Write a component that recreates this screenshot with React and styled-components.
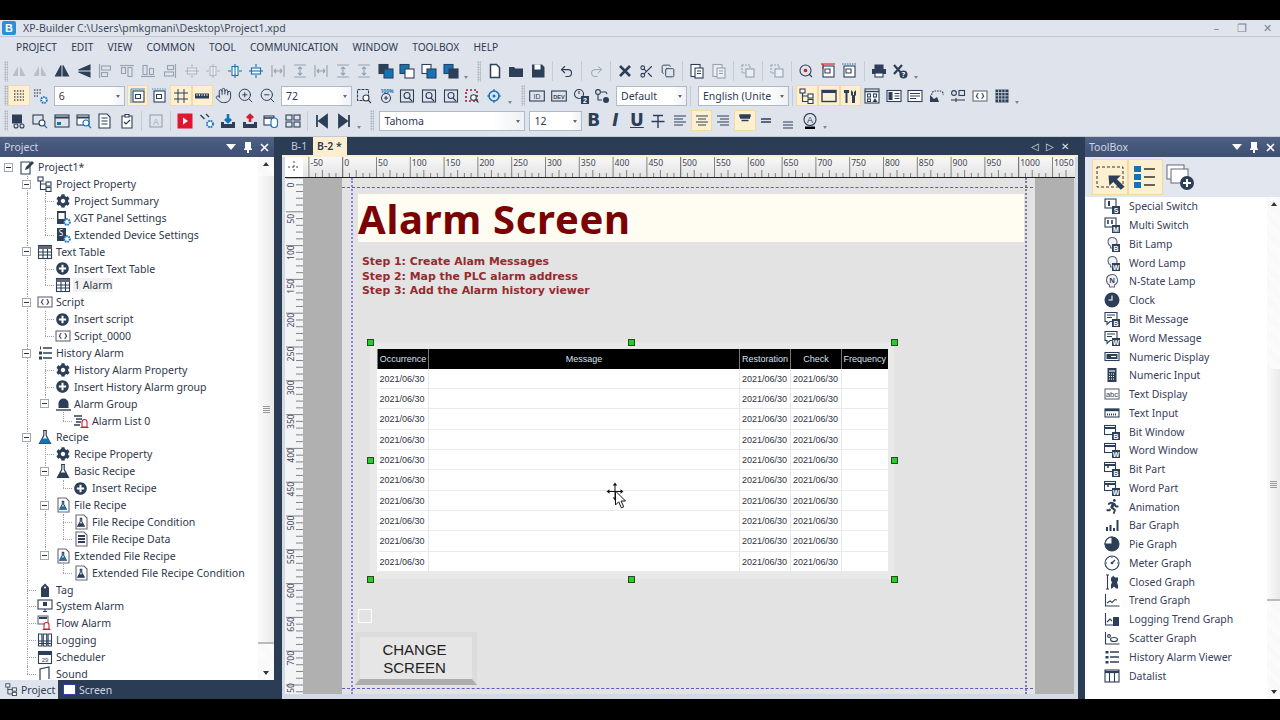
import React from 'react'
import styled, { createGlobalStyle } from 'styled-components'
import { Hand, ZoomIn, ZoomOut, Undo2, Redo2, Scissors, Copy } from 'lucide-react'
import { FaCog, FaPlusCircle, FaRunning } from 'react-icons/fa'

const NAVY = '#2d3f58'
const BLUE = '#1273b9'

const GlobalStyle = createGlobalStyle`
  html, body { margin: 0; width: 1280px; height: 720px; overflow: hidden; background: #000; }
  body { font-family: "Noto Sans", "Open Sans", sans-serif; }
  * { box-sizing: border-box; }
`

const Page = styled.div`
  width: 1280px;
  height: 720px;
  display: flex;
  flex-direction: column;
  background: #000;
`
const BlackBar = styled.div`
  height: ${p => p.$h}px;
  flex: none;
  background: #000;
`
const TitleBar = styled.div`
  height: 17px;
  flex: none;
  display: flex;
  align-items: center;
  background: #e0e5ed;
  border-bottom: 1px solid #c3c8d0;
  color: #3e4a5c;
  font-size: 10.5px;
`
const AppLogo = styled.span`
  width: 14px;
  height: 14px;
  margin: 0 7px 0 2px;
  background: #2d8fd8;
  color: #fff;
  font: bold 11px "Liberation Sans", sans-serif;
  text-align: center;
  line-height: 14px;
  border-radius: 2px;
`
const WinButtons = styled.div`
  margin-left: auto;
  display: flex;
  color: #7a8494;
  span { width: 25.5px; text-align: center; }
`
const MenuBar = styled.div`
  height: 20px;
  flex: none;
  display: flex;
  align-items: center;
  gap: 14.2px;
  padding-left: 16px;
  background: #dfe4ec;
  color: #2f3a52;
  font-size: 10.2px;
`
const Toolbar = styled.div`
  height: ${p => p.$h}px;
  flex: none;
  display: flex;
  align-items: center;
  padding: ${p => p.$pt || 0}px 0 0 4px;
  background: #dfe4ec;
`
const ToolbarEnd = styled.div`
  height: 3px;
  flex: none;
  background: #dfe4ec;
`
const Grip = styled.span`
  width: 4px;
  height: 21px;
  flex: none;
  background-image: radial-gradient(#a6aeb8 0.8px, transparent 0.9px);
  background-size: 2.5px 2.5px;
`
const Slot = styled.span`
  width: 21.6px;
  height: 21px;
  flex: none;
  display: flex;
  align-items: center;
  justify-content: center;
  background: ${p => (p.$active ? '#fdf0d0' : 'transparent')};
  box-shadow: ${p => (p.$active ? 'inset 0 0 0 1px #f3d9a2' : 'none')};
  opacity: ${p => (p.$faded ? 0.4 : 1)};
  color: ${NAVY};
`
const Sep = styled.span`
  width: 7.5px;
  height: 20px;
  flex: none;
  display: flex;
  justify-content: center;
  &::before { content: ''; width: 1px; background: #c6ccd6; }
`
const More = styled.span`
  width: 10px;
  flex: none;
  align-self: flex-end;
  padding-bottom: 4px;
  display: flex;
  justify-content: center;
  &::before {
    content: '';
    border: 2.5px solid transparent;
    border-top: 3px solid #7d8794;
    border-bottom: 0;
  }
`
const Gap = styled.span`
  width: ${p => p.$w}px;
  flex: none;
`
const Combo = styled.div`
  width: ${p => p.$w}px;
  height: 20px;
  flex: none;
  display: flex;
  align-items: center;
  padding-left: 4px;
  background: linear-gradient(90deg, #fff 78%, #eef1f5);
  border: 1px solid #aebacb;
  font-size: 10.5px;
  color: #2f3a52;
  &::after {
    content: '';
    margin: 2px 4px 0 auto;
    border: 2.5px solid transparent;
    border-top: 3px solid #667;
    border-bottom: 0;
  }
`
const Glyph = styled.span`
  font: ${p => p.$style || 'bold'} 17px "DejaVu Sans", sans-serif;
  line-height: 1;
  color: ${NAVY};
  text-decoration: ${p => p.$deco || 'none'};
`

const Main = styled.div`
  height: 563px;
  flex: none;
  display: flex;
  background: #2b3c55;
  border-top: 1px solid #c4cad3;
`
const SidePanel = styled.section`
  width: ${p => p.$w}px;
  flex: none;
  margin-left: ${p => p.$ml || 0}px;
  display: flex;
  flex-direction: column;
`
const PanelHead = styled.header`
  height: 20px;
  flex: none;
  display: flex;
  align-items: center;
  padding: 0 5px 0 4px;
  background: linear-gradient(#4f6283, #43557a 60%, #3f5072);
  color: #cfd6e2;
  font-size: 10.5px;
`
const HeadIcons = styled.div`
  margin-left: auto;
  display: flex;
  align-items: center;
  gap: 8px;
  color: #fff;
  svg { display: block; }
`
const TreeWrap = styled.div`
  flex: 1;
  min-height: 0;
  display: flex;
  background: #fff;
  overflow: hidden;
`
const TreeList = styled.div`
  flex: 1;
  padding-top: 1.8px;
  overflow: hidden;
`
const Row = styled.div`
  height: 16.9px;
  display: flex;
  align-items: center;
  font-size: 10.55px;
  color: #30384c;
  white-space: nowrap;
`
const Guide = styled.span`
  width: 18px;
  height: 100%;
  flex: none;
  position: relative;
  &::before {
    content: ${p => (p.$v ? "''" : 'none')};
    position: absolute;
    left: 8.5px;
    top: 0;
    height: ${p => (p.$half ? '50%' : '100%')};
    border-left: 1px dotted #a0a0a0;
  }
  &::after {
    content: ${p => (p.$h ? "''" : 'none')};
    position: absolute;
    left: 9px;
    top: 50%;
    width: 9px;
    border-top: 1px dotted #a0a0a0;
  }
`
const Expander = styled.span`
  position: absolute;
  left: 4px;
  top: 4px;
  width: 9px;
  height: 9px;
  z-index: 1;
  background: #fff;
  border: 1px solid #a3a8b0;
  &::before {
    content: '';
    position: absolute;
    left: 1px;
    right: 1px;
    top: 3px;
    border-top: 1px solid #333;
  }
`
const RowIcon = styled.span`
  width: 17px;
  height: 16px;
  flex: none;
  margin-right: 3px;
  display: flex;
  align-items: center;
  justify-content: center;
  color: ${NAVY};
`
const RowText = styled.span`
  background: ${p => (p.$sel ? '#f1f1f1' : 'transparent')};
  padding: 0 ${p => (p.$sel ? 1 : 0)}px;
  margin-left: ${p => (p.$sel ? -1 : 0)}px;
`
const Scroll = styled.div`
  width: ${p => p.$w}px;
  flex: none;
  display: flex;
  flex-direction: column;
  background: repeating-linear-gradient(45deg, #f7f7f7 0 1px, #fdfdfd 1px 2px);
`
const ScrollBtn = styled.div`
  height: 14px;
  flex: none;
  display: flex;
  align-items: center;
  justify-content: center;
  &::before {
    content: '';
    border: 3.5px solid transparent;
    ${p => (p.$down ? 'border-top: 4px solid #333; border-bottom: 0;' : 'border-bottom: 4px solid #333; border-top: 0;')}
  }
`
const ScrollThumb = styled.div`
  height: ${p => p.$h}px;
  flex: none;
  margin-top: ${p => p.$mt || 0}px;
  display: flex;
  align-items: center;
  justify-content: center;
  background: linear-gradient(90deg, #fafafa, #eaeaea);
  border-bottom: 2px solid #bbb;
  &::before {
    content: '';
    width: 7px;
    height: 7px;
    background: repeating-linear-gradient(#999 0 1px, transparent 1px 2px);
  }
`
const ThumbSpacer = styled.div`
  flex: 1;
`
const BottomTabs = styled.div`
  height: 19px;
  flex: none;
  display: flex;
  font-size: 10.5px;
`
const BottomTab = styled.div`
  display: flex;
  align-items: center;
  gap: 3px;
  width: 58px;
  padding-left: 5px;
  background: ${p => (p.$on ? '#dfe4ec' : 'transparent')};
  color: ${p => (p.$on ? '#2f3a52' : '#cfd6e2')};
`

const Center = styled.section`
  width: 796px;
  flex: none;
  margin-left: 8px;
  display: flex;
  flex-direction: column;
`
const DocTabs = styled.div`
  height: 18px;
  flex: none;
  display: flex;
  align-items: stretch;
  padding-left: 6px;
  font-size: 10.5px;
  white-space: nowrap;
`
const DocTab = styled.div`
  display: flex;
  align-items: center;
  flex: none;
  padding-left: ${p => (p.$on ? 4 : 3)}px;
  width: ${p => (p.$on ? 34 : 25)}px;
  background: ${p => (p.$on ? '#fdeecf' : 'transparent')};
  color: ${p => (p.$on ? '#2b3c55' : '#c2cbd8')};
  font-weight: ${p => (p.$on ? 600 : 400)};
`
const DocNav = styled.div`
  margin-left: auto;
  display: flex;
  align-items: center;
  gap: 7px;
  padding-right: 9px;
  color: #dbe1ea;
  font-size: 10px;
`
const DocFrame = styled.div`
  flex: 1;
  min-height: 0;
  display: flex;
  flex-direction: column;
  padding: 0 3px 5px 3px;
  background: #d3dae6;
  border-top: 2px solid #fdeecf;
`
const RulerRow = styled.div`
  height: 21px;
  flex: none;
  display: flex;
`
const Corner = styled.div`
  width: 18px;
  flex: none;
  background: #fff;
  border-bottom: 1px solid #222;
  display: flex;
  align-items: center;
  justify-content: center;
`
const DocBody = styled.div`
  flex: 1;
  min-height: 0;
  display: flex;
  overflow: hidden;
`
const VRuler = styled.div`
  width: 18px;
  flex: none;
  background: #f3f4f6;
  overflow: hidden;
`
const Gutter = styled.div`
  width: ${p => p.$w}px;
  flex: none;
  background: #b0b0b0;
`
const Sheet = styled.div`
  width: 693px;
  flex: none;
  position: relative;
  background: #e3e3e3;
  overflow: hidden;
`
const HDash = styled.div`
  position: absolute;
  left: 0;
  right: 2px;
  top: ${p => p.$y}px;
  border-top: 1px dashed #5a5ad0;
`
const VDash = styled.div`
  position: absolute;
  top: 0;
  bottom: 0;
  left: ${p => p.$x}px;
  border-left: 2px dotted ${p => p.$c};
`
const TitleBand = styled.div`
  position: absolute;
  left: 16px;
  top: 16px;
  width: 666px;
  height: 48px;
  display: flex;
  align-items: center;
  background: #fffdf2;
  color: #7b0202;
  font: 700 40px "Noto Sans", sans-serif;
  letter-spacing: .7px;
  white-space: nowrap;
`
const Steps = styled.div`
  position: absolute;
  left: 20px;
  top: 77px;
  color: #962a2e;
  font: 700 10.9px/14.5px "DejaVu Sans", sans-serif;
  white-space: nowrap;
`
const TableShade = styled.div`
  position: absolute;
  left: 28px;
  top: 164px;
  width: 524px;
  height: 237px;
  padding: 7px;
  background: #e9e9e9;
`
const AlarmTable = styled.table`
  width: 510px;
  height: 223px;
  table-layout: fixed;
  border-collapse: collapse;
  background: #fff;
  font: 9px "Liberation Sans", sans-serif;
  color: #2c3240;
`
const Th = styled.th`
  width: ${p => p.$w}px;
  height: 20px;
  padding: 0;
  background: #000;
  color: #d8e2f4;
  font-weight: 400;
  border-left: 1px solid #777;
  white-space: nowrap;
  overflow: hidden;
`
const Td = styled.td`
  padding: 1px 0 0 2px;
  border-right: 1px solid #e6e8ec;
  border-bottom: 1px solid #e8eaee;
  &:last-child { border-right: 0; }
`
const Handle = styled.span`
  position: absolute;
  left: ${p => p.$x - 3.5}px;
  top: ${p => p.$y - 3.5}px;
  width: 7px;
  height: 7px;
  background: #26cf26;
  border: 1px solid #254a25;
`
const GhostBox = styled.div`
  position: absolute;
  left: 16px;
  top: 431px;
  width: 14px;
  height: 14px;
  border: 1px solid #fff;
`
const ScreenButton = styled.div`
  position: absolute;
  left: 13px;
  top: 454px;
  width: 122px;
  height: 53px;
  display: flex;
  align-items: center;
  justify-content: center;
  padding: 2px 3px 0 0;
  text-align: center;
  background: #e6e6e6;
  border-style: solid;
  border-width: 5px 5px 6px 5px;
  border-color: #dcdcdc #dcdcdc #adadad #dcdcdc;
  color: #222;
  font: 15px/18px "Liberation Sans", sans-serif;
`
const Cursor = styled.svg`
  position: absolute;
  left: 264px;
  top: 304px;
`
const ToolGroup = styled.div`
  height: 40px;
  flex: none;
  display: flex;
  align-items: center;
  padding-left: 7px;
  background: #e2e6ee;
`
const BigTool = styled.span`
  width: ${p => p.$w || 35.5}px;
  height: 36px;
  display: flex;
  align-items: center;
  justify-content: center;
  background: ${p => (p.$on ? '#fdf0d0' : 'transparent')};
  box-shadow: ${p => (p.$on ? 'inset 0 0 0 1px #f3d9a2' : 'none')};
`
const ToolList = styled.div`
  flex: 1;
  min-height: 0;
  display: flex;
  background: #fff;
`
const Items = styled.div`
  flex: 1;
  padding: 0 0 0 18px;
`
const Item = styled.div`
  height: 18.77px;
  display: flex;
  align-items: center;
  gap: 8px;
  font-size: 10.45px;
  color: #38405a;
  white-space: nowrap;
`
const ItemIcon = styled.span`
  width: 18px;
  height: 16px;
  flex: none;
  display: flex;
  align-items: center;
  justify-content: center;
  color: ${NAVY};
`

/* toolbar and tree drawings, all on a 16x16 box */
const Svg = ({ children, size = 16 }) => (
  <svg width={size} height={size} viewBox="0 0 16 16" fill="none" stroke={NAVY} strokeWidth="1.1">{children}</svg>
)
const align = r => <g transform={`rotate(${r} 8 8)`}><path d="M2.5 1v14" /><rect x="4.5" y="3" width="9" height="4" /><rect x="4.5" y="9.5" width="6" height="4" /></g>
const middle = (r, c) => <g transform={`rotate(${r} 8 8)`} stroke={c}><path d="M1 8h3M12 8h3" /><rect x="5" y="3.5" width="6" height="9" fill="#fff" /><path d="M8 1v14" /></g>
const spacing = r => <g transform={`rotate(${r} 8 8)`}><path d="M2 2v12M14 2v12M4 8h8M4 8l2-2M4 8l2 2M12 8l-2-2M12 8l-2 2" /></g>
const layers = (a, b) => <><rect x="1" y="1.5" width="9" height="9" fill={a} stroke={NAVY} /><rect x="6" y="6" width="9" height="9" fill={b} stroke={NAVY} /></>
const badge = l => <><rect x="8" y="8" width="8" height="8" fill={NAVY} stroke="none" /><text x="12" y="15" fontSize="7" fontWeight="700" textAnchor="middle" fill="#fff" stroke="none" fontFamily="Liberation Sans">{l}</text></>
const flask = (c, sw = 1.2) => <g strokeWidth={sw}><path d="M6 1.5h4M6.8 1.5v5L2.5 14.5h11L9.2 6.5v-5z" fill="#fff" /><path d="M5 9.5h6l2.5 5h-11z" fill={c} stroke="none" /></g>
const docFlask = c => <><path d="M3 1h8l3 3v11H3z" fill="#fff" stroke="#667" /><g transform="translate(3.2 3.5) scale(.6)">{flask(c, 1.8)}</g></>
const gearSmall = <circle cx="12" cy="12" r="2.8" fill="#fff" stroke={BLUE} strokeWidth="2" strokeDasharray="1.6 .8" />
const lamp = <path d="M4 6a4.500 4.500 0 1 1 6.500 4v2h-4v-2A4.500 4.500 0 0 1 4 6z" fill="#eef2f6" stroke="#667" />
const winIcon = <><rect x=".5" y="1.5" width="11" height="9" fill="#fff" /><path d="M.5 4h11" strokeWidth="2" /></>
const msg = <path d="M1 1.5h12v9H6l-3 3v-3H1z" fill="#fff" />

const art = {
  triFade: <path d="M7 3v10H1.5zM9 3l5.5 10H9z" fill="#889" stroke="none" />,
  flipH: <path d="M7 2.5V13H1.5zM9 2.5V13h5.5z" fill={NAVY} />,
  flipV: <path d="M14 2 2.5 7H14zM14 9H2.5L14 14z" fill={NAVY} />,
  alL: align(0), alT: align(90), alB: align(270), alR: align(180),
  midH: middle(90, '#778'), midV: middle(0, '#778'), midB: middle(0, BLUE), midC: middle(90, BLUE),
  spH: spacing(0), spV: spacing(90), spI: spacing(180), spJ: spacing(270),
  lay1: layers(NAVY, BLUE), lay2: layers(BLUE, '#fff'), lay3: layers('#fff', BLUE), lay4: layers(BLUE, NAVY),
  file: <path d="M3.500 1.500h6l3 3v10h-9z" fill="#fff" strokeWidth="1.5" />,
  open: <path d="M1 4h5l1.500 1.500H15V14H1z" fill={NAVY} stroke="none" />,
  save: <><path d="M2 1.500h10l2.500 2.500v10.500H2z" fill={NAVY} stroke="none" /><rect x="4.500" y="1.500" width="6" height="5" fill="#fff" stroke="none" /></>,
  xBig: <path d="M3 3l10 10M13 3 3 13" strokeWidth="2.6" />,
  paste: <><rect x="2" y="1.500" width="9" height="12" fill="#fff" /><rect x="6" y="5" width="8" height="10" fill="#fff" /><path d="M8 8h4M8 10.500h4" /></>,
  group: <><path d="M2 2h8v8H2z" strokeDasharray="2 1" /><rect x="6" y="6" width="8" height="8" fill="#fff" /></>,
  target: <><circle cx="7.500" cy="7.500" r="5.500" /><circle cx="7.500" cy="7.500" r="1.800" fill="#c22" stroke="none" /><path d="M11 11l3 3" /></>,
  pageRed: <><rect x="3" y="3" width="11" height="11" fill="#fff" /><path d="M5 6h5v4H5z" /><path d="M1 1h14" stroke="#c22" /><path d="M3 1v5" stroke="#c22" /></>,
  pageBlue: <><rect x="3" y="3" width="11" height="11" fill="#fff" /><path d="M5 6h5v4H5z" /><path d="M1 1h14" stroke={BLUE} strokeDasharray="1.500 1" /></>,
  print: <><path d="M4 2h8v4H4z" fill={NAVY} /><rect x="1" y="6" width="14" height="5" fill={NAVY} stroke="none" /><rect x="4" y="10" width="8" height="4" fill="#fff" /></>,
  xHelp: <><path d="M2 2l8 9M10 2 2 11" strokeWidth="2.2" /><circle cx="11.500" cy="11.500" r="4" fill={NAVY} stroke="none" /><text x="11.500" y="14" fontSize="7" fontWeight="700" textAnchor="middle" fill="#fff" stroke="none">?</text></>,
  dots: <path d="M3 3h10M3 6h10M3 9h10M3 12h10" stroke="#555" strokeWidth="1.5" strokeDasharray="1.500 1.400" />,
  dotsGear: <><path d="M2 2h7M2 5h7M2 8h4" stroke="#555" strokeWidth="1.4" strokeDasharray="1.400 1.300" />{gearSmall}</>,
  frame: <><rect x="3" y="3" width="11" height="11" fill="#fff" /><path d="M1 1h14M1 1v14" stroke="#3b8fc9" /><path d="M5.500 6.500h5v4h-5z" /></>,
  frame2: <><rect x="3" y="3" width="11" height="11" fill="#fff" /><path d="M1 1h14" stroke="#3b8fc9" strokeDasharray="1.500 1" /><path d="M5.500 6.500h5v4h-5z" /></>,
  grid: <path d="M1 5h14M1 11h14M5 1v14M11 1v14" strokeWidth="1" />,
  ruler: <><rect x="1" y="5.500" width="14" height="5" fill={NAVY} stroke="none" /><path d="M3 6v2M5.500 6v2M8 6v2M10.500 6v2M13 6v2" stroke="#fff" strokeWidth=".8" /></>,
  zoomArea: <><rect x="1.500" y="1.500" width="11" height="11" strokeDasharray="3 1" /><circle cx="10" cy="10" r="3" fill="#fff" /><path d="M12 12l3 3" /></>,
  zoom100: <><text x="9" y="5" fontSize="5" fontWeight="700" textAnchor="middle" fill={BLUE} stroke="none">100%</text><circle cx="8" cy="10" r="4.500" /><path d="M6 10h4M8 8v4" /></>,
  zoomFit: <><rect x="1.500" y="2" width="13" height="12" /><circle cx="8" cy="7.500" r="3" /><path d="M10 10l3 3" /></>,
  redBox: <><rect x="2" y="2" width="11" height="11" strokeDasharray="2 2" stroke="#a0183a" strokeWidth="1.6" /><circle cx="9.500" cy="9.500" r="2.800" fill="#fff" /><path d="M11.500 11.500l3 3" /></>,
  locate: <><circle cx="8" cy="8" r="5" stroke={BLUE} strokeWidth="1.6" /><circle cx="8" cy="8" r="1.500" fill={BLUE} stroke="none" /><path d="M8 1v3M8 12v3M1 8h3M12 8h3" stroke={BLUE} /></>,
  idBox: <><rect x=".7" y="3" width="14.600" height="10" /><text x="8" y="11" fontSize="7" textAnchor="middle" fill={NAVY} stroke="none" fontFamily="Liberation Sans">ID</text></>,
  devBox: <><rect x=".7" y="3" width="14.600" height="10" /><text x="8" y="10.500" fontSize="5.600" fontWeight="700" textAnchor="middle" fill={NAVY} stroke="none" fontFamily="Liberation Sans">DEV</text></>,
  clock2: <><circle cx="6" cy="6" r="4.500" /><path d="M6 3v3" />{badge('2')}</>,
  route: <><circle cx="4" cy="4" r="2.400" /><path d="M7 4h5l1 2M4 7v5h4" /><circle cx="12" cy="12" r="3" fill={NAVY} stroke="none" /></>,
  tree: <><rect x="1" y="1" width="5" height="4" fill="#fff" /><rect x="9" y="6" width="5" height="4" fill="#fff" /><rect x="9" y="11.500" width="5" height="4" fill="#fff" /><path d="M3.500 5v8.500H9M3.500 8H9" /></>,
  window: <><rect x="1" y="2.500" width="14" height="11" strokeWidth="1.4" /><path d="M1 4h14" strokeWidth="2" /></>,
  tools: <path d="M2 2h5v3H5.500v10h-2V5H2zM9 2l2 2v3h1V4l2-2v5l-1 1v7h-3V8L9 7z" fill={NAVY} stroke="none" />,
  blocks: <><rect x="1" y="1" width="14" height="14" fill="#fff" /><path d="M1 3.500h14" strokeWidth="1.5" /><rect x="3.500" y="6" width="3" height="3" /><rect x="9.500" y="6" width="3" height="3" /><rect x="3.500" y="11" width="3" height="2.500" /><path d="M9.500 13.500l1.500-2.500 1.500 2.500z" /></>,
  split: <><rect x="1" y="2.500" width="14" height="11" fill="#fff" /><rect x="2.500" y="4" width="4" height="8" fill={NAVY} stroke="none" /><path d="M8.500 5.500h5M8.500 8h5M8.500 10.500h5" /></>,
  lines: <><rect x="1" y="2.500" width="14" height="11" fill="#fff" /><path d="M3 5.500h10M3 8h10M3 10.500h6" /></>,
  cloud: <><path d="M3 7a3 3 0 0 1 3-4h5a3 3 0 0 1 3 4" strokeDasharray="1.600 1" /><path d="M1 14V7l4 4 3-2 2 5z" fill={NAVY} stroke="none" /></>,
  slider: <><circle cx="4" cy="5" r="2.400" /><rect x="9" y="2.500" width="5.500" height="5" /><path d="M1 12h14M6 10v4" /></>,
  script: <><rect x="1" y="3" width="14" height="10" fill="#fff" stroke="#667" /><path d="M6.500 5.500Q5 5.500 5 7t-1 1q1 0 1 1t1.500 1.500M9.500 5.500Q11 5.500 11 7t1 1q-1 0-1 1T9.500 10.500" /></>,
  matrix: <><rect x="1.500" y="1.500" width="13" height="13" fill={NAVY} stroke="none" /><path d="M4.500 1.500v13M7.800 1.500v13M11 1.500v13M1.500 4.500h13M1.500 7.800h13M1.500 11h13" stroke="#dfe4ec" strokeWidth=".7" /></>,
  page: <><path d="M2 1h8l3 3v11H2z" fill="#fff" /><path d="M4.500 5h6M4.500 8h6M4.500 11h6" /></>,
  check: <><path d="M3 3h10v12H3z" fill="#fff" /><path d="M6 1.500h4V4H6z" fill="#fff" /><path d="M5 9l2 2 4-4" /></>,
  find: <><rect x="1" y="2" width="10" height="9" /><circle cx="10" cy="10" r="3" fill="#fff" /><path d="M12 12l3 3" stroke={BLUE} /></>,
  plant: <><rect x="1" y="1.500" width="10" height="9" fill={NAVY} stroke="none" /><circle cx="5" cy="13" r="2" /><circle cx="11" cy="13" r="2" /></>,
  winBlue: <><rect x="1" y="2" width="14" height="12" /><path d="M1 4.500h14" strokeWidth="2" /><rect x="3" y="9" width="4" height="3" fill={BLUE} stroke="none" /></>,
  winZoom: <><rect x="1" y="2" width="12" height="10" fill="#fff" /><path d="M1 4.500h12" strokeWidth="2" /><circle cx="10" cy="10" r="3" fill="#fff" stroke={BLUE} /><path d="M12 12l3 3" stroke={BLUE} /></>,
  tableA: <><rect x="2" y="2" width="12" height="12" /><text x="8" y="11.500" fontSize="9" fontWeight="700" textAnchor="middle" fill="#889" stroke="none" fontFamily="Liberation Sans">A</text></>,
  play: <><rect x=".5" y=".5" width="15" height="15" fill="#e01530" stroke="none" /><path d="M6 4.500v7l5-3.500z" fill="#fff" stroke="none" /></>,
  chart: <><path d="M1.500 2l4 4M7 1l3 3M11 2" strokeWidth="1.4" /><circle cx="11" cy="11" r="3" fill="#fff" stroke={BLUE} strokeWidth="2" strokeDasharray="1.600 .8" /></>,
  down: <><path d="M8 1v8M5 6l3 3 3-3" stroke={BLUE} strokeWidth="2.6" /><path d="M1 9h3v2h8V9h3v6H1z" fill={NAVY} stroke="none" /></>,
  up: <><path d="M8 9V2M5 5l3-3 3 3" stroke="#d21d2e" strokeWidth="2.6" /><path d="M1 9h3v2h8V9h3v6H1z" fill={NAVY} stroke="none" /></>,
  handBox: <><rect x="1" y="3" width="10" height="9" fill="#fff" /><path d="M1 5h10" strokeWidth="1.6" /><rect x="8" y="5" width="6.500" height="9.500" rx="3" fill="#fff" stroke={BLUE} /></>,
  quad: <><rect x="1" y="2" width="6" height="5" /><rect x="9" y="2" width="6" height="5" /><rect x="1" y="9" width="6" height="5" /><rect x="9" y="9" width="6" height="5" /></>,
  first: <path d="M3 2v12M13 2v12L5 8z" fill={NAVY} strokeWidth="1.8" />,
  last: <path d="M13 2v12M3 2v12l8-6z" fill={NAVY} strokeWidth="1.8" />,
  alignL: <path d="M2 3h12M2 6h9M2 9h12M2 12h9" />,
  alignC: <path d="M2 3h12M4 6h8M2 9h12M4 12h8" />,
  alignR: <path d="M2 3h12M5 6h9M2 9h12M5 12h9" />,
  vTop: <path d="M3 2h10v1.500H3zM3 5h10M4.500 7.500h7" strokeWidth="1.4" />,
  vMid: <path d="M3 6h10M3 9h10M5 12" strokeWidth="1.6" />,
  vBot: <path d="M3 9h10M3 12h10M3 15h10" strokeWidth="1.2" />,
  fontA: <><circle cx="8" cy="6.500" r="6" /><text x="8" y="10" fontSize="9" textAnchor="middle" fill={NAVY} stroke="none" fontFamily="Liberation Sans">A</text><rect x="3" y="13.500" width="10" height="2.500" fill="#000" stroke="none" /></>,
  strike: <path d="M3 2.500h10M8 2.500V15M1.500 8.500h13" strokeWidth="1.4" />,

  project: <><path d="M2 3h9v12H2z" fill="#fff" /><path d="M6 11l1-3 6-6 2 2-6 6z" fill={NAVY} stroke="none" /></>,
  devGear: <><rect x="2" y="1" width="9" height="13" fill={NAVY} stroke="none" /><rect x="3.500" y="3" width="6" height="6" fill="#fff" stroke="none" />{gearSmall}</>,
  sGear: <><rect x="2" y="1" width="9" height="13" fill={NAVY} stroke="none" /><text x="6" y="9" fontSize="8" fill="#fff" stroke="none" textAnchor="middle">S</text>{gearSmall}</>,
  table: <><rect x="1.500" y="1.500" width="13" height="13" fill="#fff" /><path d="M1.500 3.500h13" strokeWidth="3" stroke="#667" /><path d="M1.500 8h13M1.500 11h13M6 5v10M10.500 5v10" /></>,
  list1: <><path d="M6 3h9M6 8h9M6 13h9" strokeWidth="1.7" /><path d="M3 1.500h1v3H3zM2 6.500h3v3H2zM2 11.500h3v3H2z" fill={NAVY} stroke="none" /></>,
  bell: <><path d="M3.500 12V7.500a5 5 0 0 1 10 0V12z" fill={NAVY} stroke="none" /><path d="M1 14h15" strokeWidth="1.4" /></>,
  alarmList: <><path d="M1 3h8M3 6h6M3 9h5M1 12h6" strokeWidth="1.3" /><path d="M9 14V9a2.500 2.500 0 0 1 5 0v5z" fill="#fff" stroke="#c92232" /><path d="M7.500 14.500h8" stroke="#c92232" /></>,
  flaskB: flask(BLUE), flaskN: flask(NAVY),
  docFlaskB: docFlask(BLUE), docFlaskN: docFlask(NAVY),
  docData: <><path d="M3 1h8l3 3v11H3z" fill="#fff" stroke="#667" /><path d="M5 5h7M5 8h7M5 11h7" strokeWidth="1.8" /></>,
  tag: <><path d="M4 5.500l4-4 4 4V15H4z" fill={NAVY} stroke="none" /><circle cx="8" cy="5.500" r="1" fill="#fff" stroke="none" /></>,
  monitor: <><rect x="1" y="2" width="14" height="9" fill="#fff" /><rect x="6" y="4" width="4" height="4" fill={NAVY} stroke="none" /><path d="M6 13.500h4M8 11v2" /></>,
  flow: <><rect x="1" y="1" width="10" height="8" fill="#fff" stroke="#667" /><path d="M2 3h8" strokeWidth="2" /><path d="M7 14V10a2.500 2.500 0 0 1 5 0v4z" fill="#fff" stroke="#c92232" /><path d="M5.500 14.500h8" stroke="#c92232" /></>,
  logging: <><path d="M1.500 2h3.400v12H1.500zM6.300 2h3.400v12H6.300zM11.100 2h3.400v12h-3.400z" fill="#fff" /><path d="M1.500 9h13M1.500 11.500h13" /></>,
  calendar: <><rect x="1.500" y="2.500" width="13" height="12" fill="#fff" /><path d="M1.500 4.500h13" strokeWidth="3" /><text x="8" y="13" fontSize="6" textAnchor="middle" fill="#445" stroke="none" fontFamily="Liberation Sans">29</text></>,
  note: <path d="M3 15V3l9-2v12" strokeWidth="1.2" />,

  special: <><rect x="1" y="1" width="11" height="9" fill="#fff" /><path d="M5 3v5" strokeWidth="2" />{badge('S')}</>,
  multi: <><rect x="1" y="1" width="11" height="9" fill="#fff" /><path d="M4 3v4M8 3v4" strokeWidth="1.6" />{badge('M')}</>,
  bitLamp: <>{lamp}{badge('B')}</>,
  wordLamp: <>{lamp}{badge('W')}</>,
  nLamp: <><path d="M2.500 7a5.500 5.500 0 1 1 8 5v2h-5v-2a5.500 5.500 0 0 1-3-5z" fill="#eef2f6" stroke="#667" /><text x="8" y="10" fontSize="7" fontWeight="700" textAnchor="middle" fill={NAVY} stroke="none">N</text></>,
  clock: <><circle cx="8" cy="8" r="7.500" fill={NAVY} stroke="none" /><path d="M8 3.500V8H4.500" stroke="#fff" /></>,
  bitMsg: <>{msg}<path d="M3 4h8M3 6.500h5" />{badge('B')}</>,
  wordMsg: <>{msg}<path d="M3 4h8M3 6.500h5" />{badge('W')}</>,
  numDisp: <><rect x="1" y="3.500" width="14" height="8" fill="#fff" /><rect x="2.500" y="5" width="11" height="5" fill={NAVY} stroke="none" /><path d="M7 7.500h5" stroke="#fff" /></>,
  calc: <><rect x="3.500" y="1" width="9" height="14" fill={NAVY} stroke="none" /><path d="M5 4h6" stroke="#fff" /><path d="M5 7h6M5 9.500h6M5 12h6" stroke="#fff" strokeDasharray="1 1" /></>,
  textDisp: <><rect x="1" y="3" width="14" height="10" fill="#fff" stroke="#667" /><text x="8" y="11" fontSize="7.500" textAnchor="middle" fill={NAVY} stroke="none" fontFamily="Liberation Sans">abc</text></>,
  textIn: <><rect x="1" y="4" width="14" height="8" fill="#fff" /><path d="M1 5h14" strokeWidth="2.4" /><path d="M3 9.500h10" strokeDasharray="1 1" strokeWidth="2" /></>,
  bitWin: <>{winIcon}{badge('B')}</>,
  wordWin: <>{winIcon}{badge('W')}</>,
  bitPart: <>{winIcon}<path d="M3 6h2" strokeWidth="1.5" />{badge('B')}</>,
  wordPart: <>{winIcon}<path d="M3 6h2" strokeWidth="1.5" />{badge('W')}</>,
  bars: <path d="M3 14v-4M6.500 14V8M10 14v-3M13.500 14V3" strokeWidth="2" />,
  pie: <><circle cx="8" cy="8" r="7" fill={NAVY} /><path d="M8 8V1a7 7 0 0 0-7 7z" fill="#fff" /></>,
  meter: <><circle cx="8" cy="8" r="7" fill="#fff" /><path d="M8 8l3-3" /><circle cx="8" cy="8" r=".8" fill={NAVY} /><path d="M8 2v1M2 8h1M13 8h1" /></>,
  closed: <><path d="M2 1h3M2 15h3M3.500 1v14" /><path d="M9 1.500l2 2h3v3l-1 2 1 3v3h-2l-2-2-2 2H7v-4l1-2-1-2V3.500h1z" fill={NAVY} stroke="none" /></>,
  trend: <><path d="M1.500 2v12h14" /><path d="M3 11l3-2 2 1.500 3-3 2 .5" stroke="#445" /></>,
  logTrend: <><path d="M1.500 2v12h8" /><path d="M3 11l3-3 2 2" /><rect x="9" y="6" width="6" height="9" fill={NAVY} stroke="none" /></>,
  scatter: <><path d="M1.500 2v12h14" /><circle cx="5" cy="6" r="1.400" /><ellipse cx="10" cy="9.500" rx="3.500" ry="2" /></>,
  history: <><path d="M6 3h9M6 8h9M6 13h9" strokeWidth="1.7" /><path d="M1.500 2h3v2.500h-3zM1.500 7h3v2.500h-3zM1.500 12h3v2.500h-3z" fill={NAVY} stroke="none" /></>,
  datalist: <><rect x="1" y="2" width="14" height="12" fill="#fff" /><path d="M1 4h14" strokeWidth="2.2" /><path d="M5.500 5v9M10.500 5v9" /></>,
}

const lucide = {
  hand: <Hand size={17} strokeWidth={1.4} />,
  zin: <ZoomIn size={17} strokeWidth={1.4} />,
  zout: <ZoomOut size={17} strokeWidth={1.4} />,
  undo: <Undo2 size={15} strokeWidth={1.8} />,
  redo: <Redo2 size={15} strokeWidth={1.5} />,
  scis: <Scissors size={15} strokeWidth={1.8} />,
  copy: <Copy size={14} strokeWidth={1.6} />,
  bold: <Glyph>B</Glyph>,
  ital: <Glyph $style="italic bold">I</Glyph>,
  under: <Glyph $style="600" $deco="underline">U</Glyph>,
}

// 'name', 'name:f' faded, 'name:a' active, | separator, > overflow arrow, # grip, _n gap
function Tools({ list }) {
  return list.map((tok, i) => {
    if (tok === '|') return <Sep key={i} />
    if (tok === '>') return <More key={i} />
    if (tok === '#') return <Grip key={i} />
    if (tok[0] === '_') return <Gap key={i} $w={+tok.slice(1)} />
    const [n, flag] = tok.split(':')
    return <Slot key={i} $active={flag === 'a'} $faded={flag === 'f'}>{lucide[n] || <Svg>{art[n]}</Svg>}</Slot>
  })
}

const row1 = ['#', 'triFade:f', 'triFade:f', 'flipH', 'flipV', 'alL:f', 'alT:f', 'alB:f', 'alR:f', 'midH:f', 'midV:f', 'midB', 'midC', 'spH:f', 'spV:f', 'spI:f', 'spJ:f', 'spV:f', 'lay1', 'lay2', 'lay3', 'lay4', '>', '_6', '#', '_2.4', 'file', 'open', 'save', '|', 'undo', '|', 'redo:f', '|', 'xBig', 'scis', 'copy', '|', 'paste', 'paste:f', '|', 'group:f', '|', 'group:f', '|', 'target', 'pageRed', 'pageBlue', '|', 'print', 'xHelp', '>']
const row2a = ['#', 'dots:a', 'dotsGear']
const row2b = ['frame:a', 'frame2', 'grid:a', 'ruler:a', 'hand', 'zin', 'zout']
const row2c = ['zoomArea', 'zoom100', 'zoomFit', 'zoomFit', 'zoomFit', 'redBox', 'locate', '>', '_6', '#', '_2', 'idBox', 'devBox', 'clock2', 'route']
const row2d = ['tree:a', 'window:a', 'tools:a', 'blocks', 'split', 'lines', 'cloud', 'slider', 'script', 'matrix', '>']
const row3a = ['#', 'plant', 'find', 'winBlue', 'winZoom', 'page', 'check', '|', 'tableA:f', '|', 'play', 'chart', 'down', 'up', 'handBox', 'quad', '|', 'first', 'last', '>', '_6', '#']
const row3b = ['bold', 'ital', 'under', 'strike', 'alignL', 'alignC:a', 'alignR', 'vTop:a', 'vMid', 'vBot', 'fontA', '>']

const tree = [
  { t: 'Project1*', i: 'project', c: [
    { t: 'Project Property', i: 'tree', c: [
      { t: 'Project Summary', i: 'gear' },
      { t: 'XGT Panel Settings', i: 'devGear' },
      { t: 'Extended Device Settings', i: 'sGear' },
    ] },
    { t: 'Text Table', i: 'table', c: [
      { t: 'Insert Text Table', i: 'plus' },
      { t: '1 Alarm', i: 'table', sel: true },
    ] },
    { t: 'Script', i: 'script', c: [
      { t: 'Insert script', i: 'plus' },
      { t: 'Script_0000', i: 'script' },
    ] },
    { t: 'History Alarm', i: 'list1', c: [
      { t: 'History Alarm Property', i: 'gear' },
      { t: 'Insert History Alarm group', i: 'plus' },
      { t: 'Alarm Group', i: 'bell', c: [{ t: 'Alarm List 0', i: 'alarmList' }] },
    ] },
    { t: 'Recipe', i: 'flaskB', c: [
      { t: 'Recipe Property', i: 'gear' },
      { t: 'Basic Recipe', i: 'flaskN', c: [{ t: 'Insert Recipe', i: 'plus' }] },
      { t: 'File Recipe', i: 'docFlaskB', c: [
        { t: 'File Recipe Condition', i: 'docFlaskN' },
        { t: 'File Recipe Data', i: 'docData' },
      ] },
      { t: 'Extended File Recipe', i: 'docFlaskB', c: [{ t: 'Extended File Recipe Condition', i: 'docFlaskN' }] },
    ] },
    { t: 'Tag', i: 'tag' },
    { t: 'System Alarm', i: 'monitor' },
    { t: 'Flow Alarm', i: 'flow' },
    { t: 'Logging', i: 'logging' },
    { t: 'Scheduler', i: 'calendar' },
    { t: 'Sound', i: 'note' },
  ] },
]

function flatten(nodes, level, rails, out) {
  nodes.forEach((n, idx) => {
    const last = idx === nodes.length - 1 && level > 0
    out.push({ ...n, level, rails, last })
    if (n.c) flatten(n.c, level + 1, [...rails, level > 0 && !last], out)
  })
  return out
}
const rows = flatten(tree, 0, [], [])

function rowIcon(name) {
  if (name === 'gear') return <FaCog size={14} />
  if (name === 'plus') return <FaPlusCircle size={13} />
  return <Svg>{art[name]}</Svg>
}

function TreeRow({ row }) {
  return (
    <Row>
      {row.rails.map((on, i) => <Guide key={i} $v={on} />)}
      <Guide $v={row.level > 0} $half={row.last} $h={!row.c && row.level > 0}>
        {row.c && <Expander />}
      </Guide>
      <RowIcon>{rowIcon(row.i)}</RowIcon>
      <RowText $sel={row.sel}>{row.t}</RowText>
    </Row>
  )
}

const tools = [
  ['Special Switch', 'special'], ['Multi Switch', 'multi'], ['Bit Lamp', 'bitLamp'], ['Word Lamp', 'wordLamp'],
  ['N-State Lamp', 'nLamp'], ['Clock', 'clock'], ['Bit Message', 'bitMsg'], ['Word Message', 'wordMsg'],
  ['Numeric Display', 'numDisp'], ['Numeric Input', 'calc'], ['Text Display', 'textDisp'], ['Text Input', 'textIn'],
  ['Bit Window', 'bitWin'], ['Word Window', 'wordWin'], ['Bit Part', 'bitPart'], ['Word Part', 'wordPart'],
  ['Animation', 'run'], ['Bar Graph', 'bars'], ['Pie Graph', 'pie'], ['Meter Graph', 'meter'],
  ['Closed Graph', 'closed'], ['Trend Graph', 'trend'], ['Logging Trend Graph', 'logTrend'], ['Scatter Graph', 'scatter'],
  ['History Alarm Viewer', 'history'], ['Datalist', 'datalist'],
]

function HorizontalRuler() {
  const ticks = []
  for (let u = -110; u <= 1070; u += 10) {
    const x = 39.7 + u * 0.676
    const h = u % 50 === 0 ? 20 : u % 50 === 20 || u % 50 === -30 ? 7 : 4
    ticks.push(<line key={u} x1={x} x2={x} y1={20} y2={20 - h} stroke={u === 0 || u === 500 || u === 1000 ? '#222' : '#555'} strokeWidth=".7" />)
  }
  const labels = []
  for (let u = -50; u <= 1050; u += 50) {
    labels.push(<text key={u} x={39.7 + u * 0.676 + 1.5} y="9" fontSize="8.600" fill="#445" fontFamily="Noto Sans" stroke="none">{u}</text>)
  }
  return (
    <svg width="772" height="21" style={{ display: 'block', background: 'linear-gradient(#f8f8f8, #e2e2e2)' }}>
      {ticks}{labels}
      <line x1="0" x2="772" y1="20.500" y2="20.500" stroke="#222" />
    </svg>
  )
}

function VerticalRuler() {
  const ticks = []
  for (let u = 0; u <= 770; u += 10) {
    const y = u * 0.676
    const w = u % 50 === 0 ? 17 : 7
    ticks.push(<line key={u} y1={y} y2={y} x1={18} x2={18 - w} stroke="#555" strokeWidth=".7" />)
  }
  const labels = []
  for (let u = 0; u <= 700; u += 50) {
    const y = u * 0.676 + 7
    labels.push(<text key={u} transform={`translate(9 ${y}) rotate(-90)`} textAnchor="middle" fontSize="8.600" fill="#445" fontFamily="Noto Sans" stroke="none">{u}</text>)
  }
  // the last label: only its last two digits are still on the sheet
  labels.push(<text key="tail" transform="translate(9 510) rotate(-90)" textAnchor="middle" fontSize="8.600" fill="#445" fontFamily="Noto Sans" stroke="none">50</text>)
  return <svg width="18" height="520" style={{ display: 'block' }}>{ticks}{labels}</svg>
}

const columns = [['Occurrence', 51], ['Message', 311], ['Restoration', 51], ['Check', 51], ['Frequency', 46]]
const handles = [[28, 164], [289, 164], [552, 164], [28, 282], [552, 282], [28, 401], [289, 401], [552, 401]]

function AlarmViewer() {
  return (
    <TableShade>
      <AlarmTable>
        <thead>
          <tr>{columns.map(([name, w]) => <Th key={name} $w={w}>{name}</Th>)}</tr>
        </thead>
        <tbody>
          {Array.from({ length: 10 }, (_, i) => (
            <tr key={i}>
              <Td>2021/06/30</Td><Td /><Td>2021/06/30</Td><Td>2021/06/30</Td><Td />
            </tr>
          ))}
        </tbody>
      </AlarmTable>
    </TableShade>
  )
}

export default function App() {
  return (
    <>
      <GlobalStyle />
      <Page>
        <BlackBar $h={20} />
        <TitleBar>
          <AppLogo>B</AppLogo>
          XP-Builder C:\Users\pmkgmani\Desktop\Project1.xpd
          <WinButtons><span>–</span><span>❐</span><span>✕</span></WinButtons>
        </TitleBar>
        <MenuBar>
          {['PROJECT', 'EDIT', 'VIEW', 'COMMON', 'TOOL', 'COMMUNICATION', 'WINDOW', 'TOOLBOX', 'HELP'].map(m => <span key={m}>{m}</span>)}
        </MenuBar>
        <Toolbar $h={26} $pt={2}><Tools list={row1} /></Toolbar>
        <Toolbar $h={25}>
          <Tools list={row2a} />
          <Gap $w={2.6} /><Combo $w={71}>6</Combo><Gap $w={2} />
          <Tools list={row2b} />
          <Gap $w={3} /><Combo $w={71}>72</Combo><Gap $w={1.5} />
          <Tools list={row2c} />
          <Gap $w={3} /><Combo $w={71}>Default</Combo><Sep />
          <Gap $w={3.5} /><Combo $w={91}>English (Unite</Combo><Sep />
          <Tools list={row2d} />
        </Toolbar>
        <Toolbar $h={25}>
          <Tools list={row3a} />
          <Gap $w={5} /><Combo $w={146}>Tahoma</Combo><Gap $w={4} /><Combo $w={53}>12</Combo><Gap $w={.5} />
          <Tools list={row3b} />
        </Toolbar>
        <ToolbarEnd />
        <Main>
          <SidePanel $w={274}>
            <PanelHead>
              Project
              <HeadIcons>
                <svg width="10" height="6"><path d="M0 0h10L5 6z" fill="#fff" /></svg>
                <svg width="8" height="11"><path d="M1 0h6v6l1 1v1H5v3H3V8H0V7l1-1z" fill="#fff" /></svg>
                <svg width="9" height="9"><path d="M1 1l7 7M8 1 1 8" stroke="#fff" strokeWidth="1.6" /></svg>
              </HeadIcons>
            </PanelHead>
            <TreeWrap>
              <TreeList>
                {rows.map((r, i) => <TreeRow key={i} row={r} />)}
              </TreeList>
              <Scroll $w={16}>
                <ScrollBtn />
                <ScrollThumb $h={468} $mt={5} />
                <ThumbSpacer />
                <ScrollBtn $down />
              </Scroll>
            </TreeWrap>
            <BottomTabs>
              <BottomTab $on><Svg size={13}>{art.tree}</Svg>Project</BottomTab>
              <BottomTab>
                <svg width="13" height="11"><rect x=".5" y=".5" width="12" height="10" fill="#fff" stroke="#3a3ab0" /></svg>
                Screen
              </BottomTab>
            </BottomTabs>
          </SidePanel>
          <Center>
            <DocTabs>
              <DocTab>B-1</DocTab>
              <DocTab $on>B-2 *</DocTab>
              <DocNav><span>◁</span><span>▷</span><span>✕</span></DocNav>
            </DocTabs>
            <DocFrame>
              <RulerRow>
                <Corner>
                  <svg width="12" height="12"><path d="M6 0v12M0 6h12" stroke="#444" strokeDasharray="2 2" /></svg>
                </Corner>
                <HorizontalRuler />
              </RulerRow>
              <DocBody>
                <VRuler><VerticalRuler /></VRuler>
                <Gutter $w={39} />
                <Sheet>
                  <HDash $y={9} />
                  <HDash $y={510} />
                  <VDash $x={9} $c="#8585e6" />
                  <VDash $x={683} $c="#7c80a0" />
                  <TitleBand>Alarm Screen</TitleBand>
                  <Steps>
                    Step 1: Create Alam Messages<br />
                    Step 2: Map the PLC alarm address<br />
                    Step 3: Add the Alarm history viewer
                  </Steps>
                  <AlarmViewer />
                  {handles.map(([x, y]) => <Handle key={`${x}-${y}`} $x={x} $y={y} />)}
                  <GhostBox />
                  <ScreenButton>CHANGE<br />SCREEN</ScreenButton>
                  <Cursor width="22" height="28" viewBox="0 0 22 28" fill="none">
                    <path d="M9 3v14M2 9.500h14" stroke="#111" />
                    <path d="M9 .5 6.800 3.500h4.400zM9 18.500 6.800 15.500h4.400zM.5 9.500 3.500 7.300v4.400zM17.500 9.500 14.500 7.300v4.400z" fill="#111" />
                    <path d="M9.500 9v14l3.200-3.200 2.600 6 2.400-1-2.600-5.800h4.400z" fill="#fff" stroke="#111" />
                  </Cursor>
                </Sheet>
                <Gutter $w={39} />
              </DocBody>
            </DocFrame>
          </Center>
          <SidePanel $w={195} $ml={7}>
            <PanelHead>
              ToolBox
              <HeadIcons>
                <svg width="10" height="6"><path d="M0 0h10L5 6z" fill="#fff" /></svg>
                <svg width="8" height="11"><path d="M1 0h6v6l1 1v1H5v3H3V8H0V7l1-1z" fill="#fff" /></svg>
                <svg width="9" height="9"><path d="M1 1l7 7M8 1 1 8" stroke="#fff" strokeWidth="1.6" /></svg>
              </HeadIcons>
            </PanelHead>
            <ToolGroup>
              <BigTool $on>
                <svg width="30" height="28" viewBox="0 0 30 28" fill="none">
                  <rect x="2" y="4" width="26" height="20" stroke="#333" strokeDasharray="3 2" />
                  <path d="M11 12h13l-4 4 8 8-4 3-8-8-4 4z" fill={NAVY} transform="translate(3 1) scale(.95)" />
                </svg>
              </BigTool>
              <BigTool $on>
                <svg width="26" height="26" viewBox="0 0 26 26" fill="none">
                  <rect x="2" y="2" width="7" height="6" fill={BLUE} /><rect x="2" y="10" width="7" height="6" fill={BLUE} /><rect x="2" y="18" width="7" height="6" fill={BLUE} />
                  <path d="M12 5h11M12 13h11M12 21h11" stroke="#333" strokeWidth="1.5" />
                </svg>
              </BigTool>
              <BigTool $w={34}>
                <svg width="30" height="28" viewBox="0 0 30 28" fill="none">
                  <rect x="2" y="2" width="17" height="14" fill="#fff" stroke="#667" /><rect x="6" y="6" width="17" height="14" fill="#fff" stroke="#667" />
                  <circle cx="22" cy="20" r="7" fill={NAVY} /><path d="M18 20h8M22 16v8" stroke="#fff" strokeWidth="2" />
                </svg>
              </BigTool>
            </ToolGroup>
            <ToolList>
              <Items>
                {tools.map(([name, ic]) => (
                  <Item key={name}>
                    <ItemIcon>{ic === 'run' ? <FaRunning size={15} /> : <Svg>{art[ic]}</Svg>}</ItemIcon>
                    {name}
                  </Item>
                ))}
              </Items>
              <Scroll $w={13}>
                <ScrollBtn />
                <ScrollThumb $h={232} $mt={158} />
                <ThumbSpacer />
                <ScrollBtn $down />
              </Scroll>
            </ToolList>
          </SidePanel>
        </Main>
        <BlackBar $h={20} />
      </Page>
    </>
  )
}
